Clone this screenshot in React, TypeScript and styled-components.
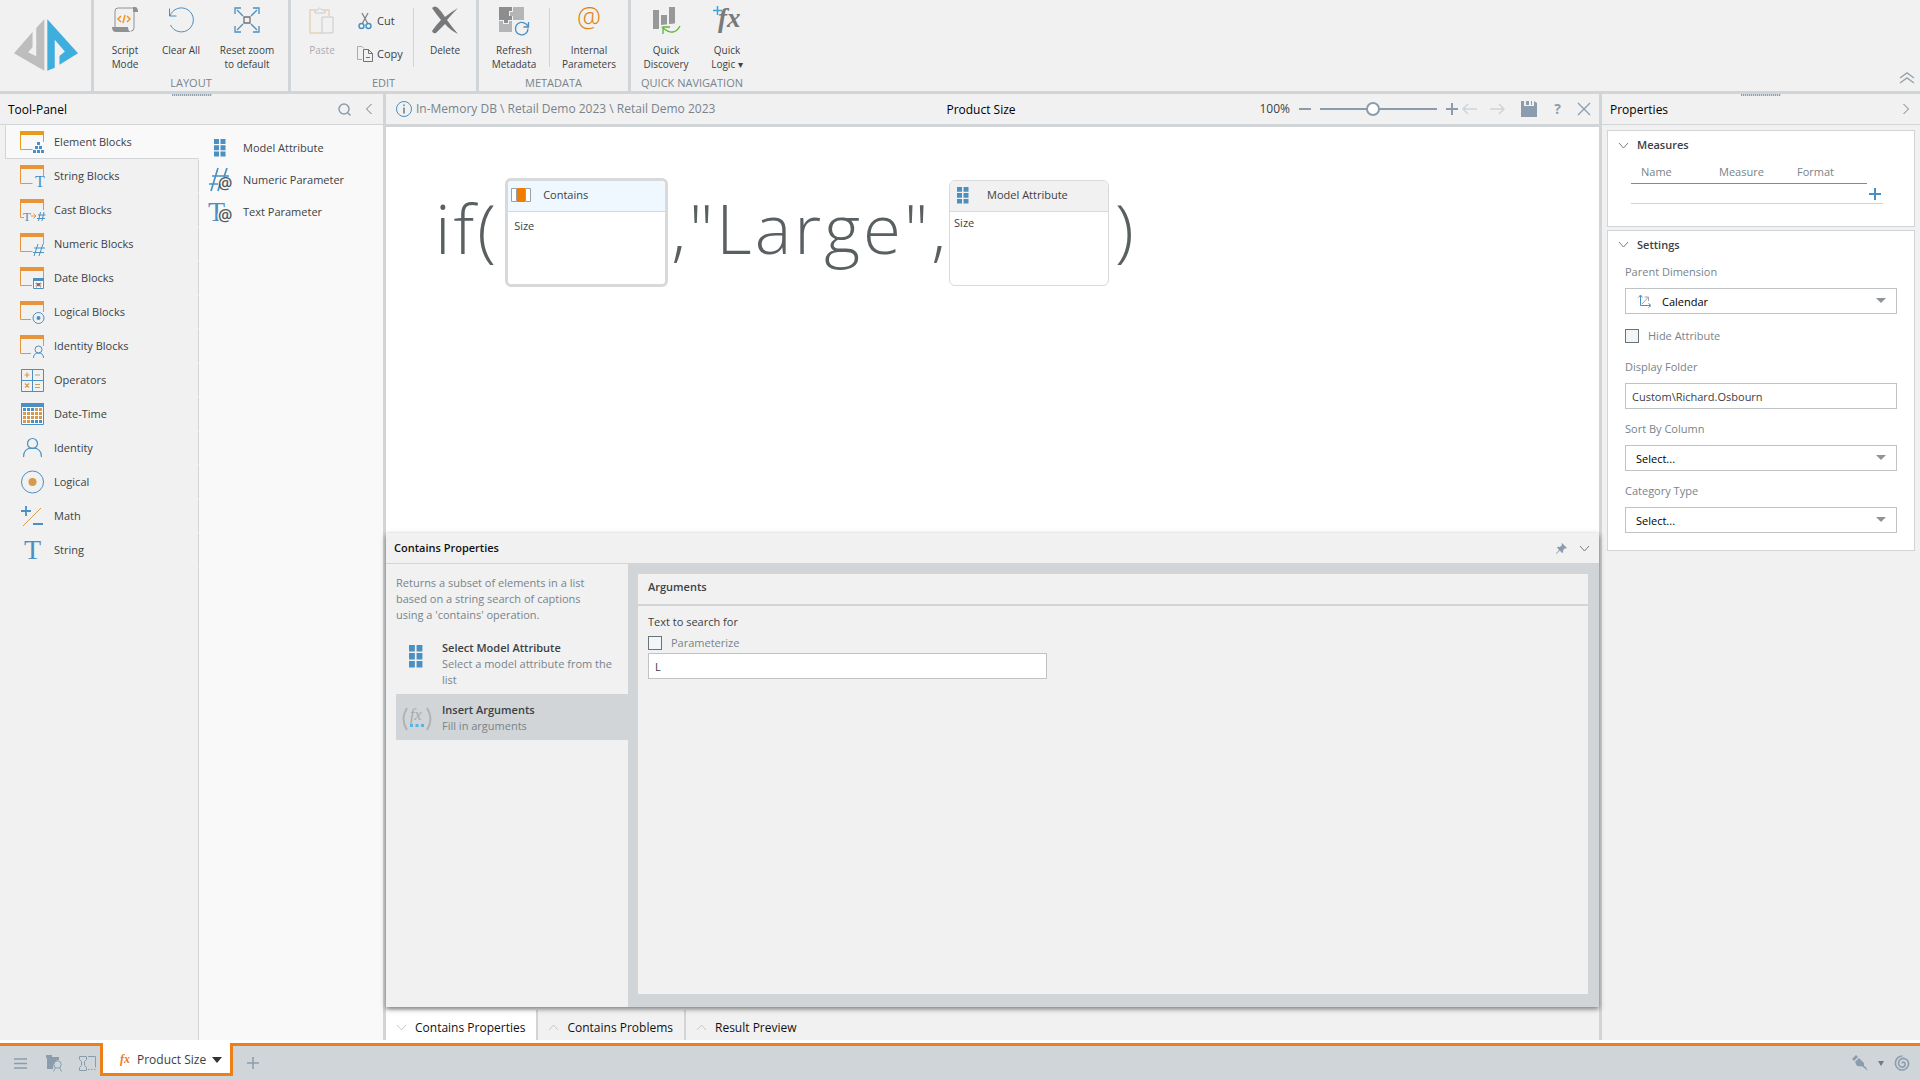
import React from "react";
import styled, { createGlobalStyle } from "styled-components";

const c = {
  bg: "#f1f1f1",
  line: "#d1d5d7",
  text: "#3b4145",
  muted: "#78848b",
  blue: "#4a90c2",
  orange: "#e8943a",
  steel: "#8b9dad",
  accent: "#ec7f17",
};

const Global = createGlobalStyle`
  *, *::before, *::after { box-sizing: border-box; }
  body { margin: 0; background: ${c.bg}; }
  button, input, select, table { font: inherit; color: inherit; }
  body, button, input, select { font-family: "Open Sans", "Noto Sans", sans-serif; }
  button { background: none; border: 0; padding: 0; cursor: pointer; }
  svg { display: block; flex: none; overflow: visible; }
  h1, h2, h3, p, ul { margin: 0; padding: 0; font: inherit; list-style: none; }
`;

const Shell = styled.div`
  display: flex;
  flex-direction: column;
  min-height: 100vh;
  font-size: 11px;
  line-height: 16px;
  color: ${c.text};
  background: ${c.bg};
`;

/* ---------- ribbon ---------- */
const Ribbon = styled.header`
  display: flex;
  height: 94px;
  border-bottom: 3px solid ${c.line};
`;
const LogoLink = styled.a`
  display: flex;
  width: 94px;
  padding: 19px 0 0 14px;
  border-right: 3px solid ${c.line};
`;
const Group = styled.section<{ $last?: boolean }>`
  display: flex;
  flex-direction: column;
  border-right: ${(p) => (p.$last ? "0" : `3px solid ${c.line}`)};
`;
const GroupBody = styled.div`
  display: flex;
  height: 75px;
`;
const GroupTitle = styled.h2`
  line-height: 16px;
  text-align: center;
  color: ${c.muted};
`;
const BigButton = styled.button<{ $w: number; $off?: boolean }>`
  display: flex;
  flex-direction: column;
  align-items: center;
  justify-content: flex-start;
  gap: 8px;
  width: ${(p) => p.$w}px;
  padding-top: 5px;
  font-size: 10px;
  line-height: 14px;
  white-space: nowrap;
  opacity: ${(p) => (p.$off ? 0.4 : 1)};
`;
const SmallStack = styled.div`
  display: flex;
  flex-direction: column;
  gap: 9px;
  width: 60px;
  padding: 9px 0 0 4px;
`;
const SmallButton = styled.button`
  display: flex;
  align-items: center;
  gap: 4px;
  height: 24px;
  line-height: 14px;
`;
const Divider = styled.span`
  width: 1px;
  height: 59px;
  margin-top: 8px;
  background: ${c.line};
`;
const Collapse = styled.button`
  align-self: flex-end;
  margin: 0 5px 7px auto;
`;

/* ---------- layout ---------- */
const Body = styled.main`
  display: flex;
  flex: 1;
`;
const ToolPanel = styled.aside`
  display: flex;
  flex-direction: column;
  width: 386px;
  border-right: 3px solid ${c.line};
`;
const PanelHead = styled.div`
  position: relative;
  display: flex;
  align-items: center;
  gap: 14px;
  height: 31px;
  padding: 0 10px 0 8px;
  border-bottom: 1px solid ${c.line};
`;
const PanelTitle = styled.h2`
  flex: 1;
  padding-top: 2px;
  font-weight: 500;
  font-size: 12px;
  color: #000;
`;
const Grip = styled.span`
  position: absolute;
  top: 0;
  left: 50%;
  width: 40px;
  height: 2px;
  transform: translateX(-50%);
  background: repeating-linear-gradient(90deg, #8fa0ae 0 1px, #d5dade 1px 2px);
`;
const ToolBody = styled.div`
  display: flex;
  flex: 1;
`;
const Categories = styled.ul`
  width: 199px;
  padding-left: 5px;
`;
const Category = styled.button<{ $on?: boolean }>`
  display: flex;
  align-items: center;
  gap: 8px;
  width: 100%;
  height: 34px;
  padding-left: 14px;
  border: 1px solid transparent;
  border-right-color: ${(p) => (p.$on ? "#f9f9f9" : c.line)};
  ${(p) => p.$on && `background: #f9f9f9; border-left-color: ${c.line}; border-bottom-color: ${c.line};`}
`;
const CategoryRest = styled.li`
  height: calc(100% - 442px);
  border-right: 1px solid ${c.line};
`;
const BlockList = styled.ul`
  flex: 1;
  padding: 7px 0 0 10px;
  background: #f9f9f9;
`;
const BlockItem = styled.button`
  display: flex;
  align-items: center;
  gap: 10px;
  height: 32px;
`;

const Work = styled.section`
  display: flex;
  flex: 1;
  flex-direction: column;
  min-width: 0;
`;
const WorkBar = styled.div`
  display: grid;
  grid-template-columns: 1fr auto 1fr;
  align-items: center;
  height: 33px;
  padding: 0 9px 0 10px;
  border-bottom: 3px solid ${c.line};
`;
const Crumbs = styled.nav`
  display: flex;
  align-items: center;
  gap: 4px;
  font-size: 12px;
  color: ${c.muted};
`;
const WorkTitle = styled.h1`
  padding: 2px 24px 0 0;
  font-size: 12px;
  font-weight: 500;
  color: #000;
`;
const Tools = styled.div`
  display: flex;
  align-items: center;
  justify-content: flex-end;
  gap: 4px;
`;
const Actions = styled.div`
  display: flex;
  align-items: center;
  gap: 16px;
`;
const History = styled.div`
  display: flex;
  gap: 13px;
`;
const Zoom = styled.label`
  display: flex;
  align-items: center;
  gap: 9px;
  font-size: 12px;
`;
const Range = styled.input`
  appearance: none;
  width: 117px;
  height: 16px;
  margin: 0;
  background: linear-gradient(${c.steel}, ${c.steel}) center / 100% 2px no-repeat;
  &::-webkit-slider-thumb {
    appearance: none;
    width: 14px;
    height: 14px;
    border: 2px solid ${c.steel};
    border-radius: 50%;
    background: #fff;
  }
`;
const Glyph = styled.span`
  display: block;
  width: 9px;
  font-size: 14px;
  font-weight: 700;
  color: ${c.steel};
`;
const Canvas = styled.div`
  display: flex;
  flex: 1;
  align-items: flex-start;
  gap: 3px;
  padding: 51px 0 0 49px;
  background: #fff;
`;
const Char = styled.span`
  font-size: 69px;
  font-weight: 300;
  line-height: 98px;
  color: #5a6062;
`;
const Node = styled.article<{ $on?: boolean }>`
  width: ${(p) => (p.$on ? 163 : 160)}px;
  height: ${(p) => (p.$on ? 109 : 106)}px;
  margin: ${(p) => (p.$on ? "0 0 0 6px" : "2px 3px 0 0")};
  border: ${(p) => (p.$on ? 3 : 1)}px solid #d7d9da;
  border-radius: 6px;
  overflow: hidden;
`;
const NodeHead = styled.header<{ $on?: boolean }>`
  display: flex;
  align-items: center;
  gap: ${(p) => (p.$on ? 12 : 18)}px;
  height: 31px;
  padding: 0 0 2px ${(p) => (p.$on ? 3 : 7)}px;
  font-weight: ${(p) => (p.$on ? 500 : 400)};
  background: ${(p) => (p.$on ? "#eef8fe" : "#f1f1f1")};
  border-bottom: 1px solid ${(p) => (p.$on ? "#c6dde9" : "#d7d9da")};
`;
const NodeBody = styled.p<{ $on?: boolean }>`
  padding: ${(p) => (p.$on ? "6px 6px" : "3px 4px")};
`;

/* ---------- block properties ---------- */
const Sheet = styled.section`
  position: relative;
  display: flex;
  flex-direction: column;
  height: 474px;
  background: ${c.bg};
  box-shadow: 0 2px 5px rgba(0, 0, 0, 0.5);
`;
const SheetHead = styled.div`
  display: flex;
  align-items: center;
  gap: 12px;
  height: 31px;
  padding: 0 9px 0 8px;
  border-bottom: 1px solid ${c.line};
`;
const SheetTitle = styled.h2`
  flex: 1;
  font-weight: 600;
  color: #111;
`;
const SheetBody = styled.div`
  display: flex;
  flex: 1;
`;
const Steps = styled.div`
  width: 242px;
  padding: 11px 0 0 10px;
  color: ${c.muted};
`;
const Intro = styled.p`
  width: 200px;
  margin-bottom: 9px;
`;
const Step = styled.button<{ $on?: boolean }>`
  display: flex;
  gap: 10px;
  width: 100%;
  padding: 8px 4px 6px 6px;
  text-align: left;
  background: ${(p) => (p.$on ? c.line : "transparent")};
`;
const StepText = styled.span`
  flex: 1;
`;
const StepTitle = styled.strong`
  display: block;
  font-weight: 600;
  color: ${c.text};
`;
const ArgsFrame = styled.div`
  flex: 1;
  padding: 10px 11px 13px 10px;
  background: ${c.line};
`;
const Args = styled.div`
  height: 100%;
  background: ${c.bg};
`;
const ArgsTitle = styled.h3`
  height: 32px;
  padding: 5px 10px 0;
  font-weight: 600;
  border-bottom: 2px solid ${c.line};
`;
const ArgsBody = styled.div`
  display: flex;
  flex-direction: column;
  gap: 5px;
  width: 419px;
  padding: 8px 10px;
`;
const ArgsField = styled.div`
  display: flex;
  flex-direction: column;
  gap: 2px;
`;
const CheckLabel = styled.label`
  display: flex;
  align-items: center;
  gap: 9px;
  color: ${c.muted};
`;
const SettingCheck = styled(CheckLabel)`
  margin: 2px 0 3px;
`;
const Check = styled.input`
  appearance: none;
  width: 14px;
  height: 14px;
  margin: 0;
  border: 1px solid #6c7377;
  background: #f3f6f9;
  &:checked { background: ${c.blue}; }
`;
const TextInput = styled.input`
  width: 100%;
  height: 26px;
  padding: 1px 6px 0;
  border: 1px solid #bfc3c5;
  background: #fff;
`;
const Tabs = styled.div`
  display: flex;
  height: 33px;
  padding-top: 3px;
`;
const Tab = styled.button<{ $on?: boolean; $last?: boolean }>`
  display: flex;
  align-items: center;
  gap: 8px;
  padding: 5px 11px 0 10px;
  font-size: 12px;
  font-weight: 500;
  color: #111;
  background: ${(p) => (p.$on ? "#fff" : "transparent")};
  border-right: ${(p) => (p.$last ? "0" : `2px solid ${c.line}`)};
`;

/* ---------- properties ---------- */
const Props = styled.aside`
  width: 321px;
  border-left: 3px solid ${c.line};
`;
const Cards = styled.div`
  display: flex;
  flex-direction: column;
  gap: 3px;
  padding: 5px;
`;
const Card = styled.section`
  padding: 6px 17px 17px;
  border: 1px solid ${c.line};
  background: #fff;
`;
const CardHead = styled.button`
  display: flex;
  align-items: center;
  gap: 8px;
  height: 16px;
  margin-left: -7px;
  font-weight: 600;
`;
const Grid = styled.table`
  width: 252px;
  margin: 11px 0 5px 6px;
  border-collapse: collapse;
  color: ${c.muted};
  th {
    height: 19px;
    padding: 0 0 2px 10px;
    font-weight: 400;
    text-align: left;
    border-bottom: 1px solid #84898c;
  }
  th:last-child { border: 0; }
  td { height: 20px; padding: 0; border-bottom: 1px solid #d0d2d3; }
`;
const AddRow = styled.button`
  display: block;
  padding: 3px 0 0 2px;
`;
const Field = styled.div`
  display: flex;
  flex-direction: column;
  gap: 8px;
`;
const Fields = styled.div`
  display: flex;
  flex-direction: column;
  gap: 12px;
  padding-top: 11px;
`;
const FieldLabel = styled.label`
  line-height: 16px;
  color: ${c.muted};
`;
const SelectBox = styled.div`
  position: relative;
`;
const Select = styled.select<{ $icon?: boolean }>`
  appearance: none;
  width: 100%;
  height: 26px;
  padding: 2px 30px 0 ${(p) => (p.$icon ? 36 : 10)}px;
  border: 1px solid #bfc3c5;
  border-radius: 0;
  background: #fff;
  color: #000;
`;
const Over = styled.span<{ $side: "left" | "right" }>`
  position: absolute;
  ${(p) => p.$side}: ${(p) => (p.$side === "left" ? 13 : 11)}px;
  top: 0;
  display: flex;
  align-items: center;
  height: 26px;
  pointer-events: none;
`;

/* ---------- task bar ---------- */
const TaskBar = styled.footer`
  display: flex;
  align-items: center;
  height: 40px;
  padding: 3px 10px 0 14px;
  border-top: 3px solid #fff;
  background: linear-gradient(${c.accent} 0 3px, #d0d5d9 3px);
`;
const TaskIcons = styled.div`
  display: flex;
  align-items: center;
  gap: 17px;
  width: 86px;
`;
const FileTab = styled.button`
  display: flex;
  align-items: center;
  align-self: flex-start;
  gap: 6px;
  width: 133px;
  height: 33px;
  margin-top: -3px;
  padding: 4px 0 0 17px;
  font-size: 12px;
  border: solid ${c.accent};
  border-width: 0 3px 3px;
  background: #fff;
`;
const AddTab = styled.button`
  margin-left: 14px;
`;
const TaskEnd = styled.div`
  display: flex;
  align-items: center;
  gap: 10px;
  margin-left: auto;
`;

/* ---------- icons ---------- */
type StrokeProps = { d: string; w?: number; h?: number; color?: string; sw?: number };
const Stroke = ({ d, w = 12, h = 12, color = c.steel, sw = 1 }: StrokeProps) => (
  <svg width={w} height={h} viewBox={`0 0 ${w} ${h}`} fill="none" stroke={color} strokeWidth={sw} aria-hidden="true">
    <path d={d} />
  </svg>
);
const Caret = ({ w = 10, h = 5, color = "#909497" }: { w?: number; h?: number; color?: string }) => (
  <svg width={w} height={h} viewBox="0 0 10 6" preserveAspectRatio="none" fill={color} aria-hidden="true">
    <path d="M0 0h10L5 6z" />
  </svg>
);
const Logo = () => (
  <svg width="64" height="52" viewBox="42 57 190 153" aria-hidden="true">
    <path fill="#bdbdbe" d="M132 57v153L42 158l55-63v45l-13 15 24 12V83z" />
    <path fill="#3eaedd" d="M141 57l91 101-55 34v-26l16-13-30-35v83l-22 9z" />
  </svg>
);
const Big = ({ children }: { children: React.ReactNode }) => (
  <svg width="30" height="30" viewBox="0 0 30 30" fill="none" aria-hidden="true">{children}</svg>
);
const ScriptIcon = () => (
  <Big>
    <path d="M5 22V6q0-3 3-3h17M24 7v16q0 3-3 3" stroke="#8f9193" />
    <path d="M23 2h2q3 0 3 5h-5zM2 22h16q0 5 4 5H6q-4 0-4-5z" fill="#8f9193" />
    <path d="M11 11l-3 3 3 3M17 11l3 3-3 3M15 10l-2 8" stroke="#f0952a" strokeWidth="1.500" />
  </Big>
);
const ClearIcon = () => (
  <Big>
    <path d="M4 11A12 12 0 1 1 4.500 20M3.500 3.500V11H10.500" stroke="#4a90c2" />
  </Big>
);
const ResetIcon = () => (
  <Big>
    <path d="M3 9V3h6M21 3h6v6M27 21v6h-6M9 27H3v-6M5 5l6 6M25 5l-6 6M25 25l-6-6M5 25l6-6" stroke="#4a90c2" strokeWidth="1.300" />
    <path d="M12 12h6v6h-6z" stroke="#6f7375" strokeWidth="1.300" />
  </Big>
);
const PasteIcon = () => (
  <Big>
    <path d="M8 5H3v23h12M18 5h4v6" stroke="#e0a263" strokeWidth="1.400" />
    <path d="M8 8V5h3q1-4 4 0h3v3zM15 12h11v16H15z" stroke="#8f9193" fill="#f1f1f1" />
  </Big>
);
const DeleteIcon = () => (
  <Big>
    <path d="M2 3q3-3 6 0 4 4 7 9 6-5 13-9-6 6-11 12 5 7 11 14-8-4-13-10-5 5-9 9-3 1-4-2 4-6 9-11Q6 9 2 3z" fill="#76787a" />
  </Big>
);
const RefreshIcon = () => (
  <Big>
    <path d="M0 2h13v4h-3v5h3v4H9v3H5v-3H0z" fill="#8b8d8f" />
    <path d="M14 2h11v13H14v-4h-3V7h3zM0 16h4v3h6v-3h3v11H0z" fill="#b4b5b6" />
    <circle cx="23" cy="24" r="8" fill="#f1f1f1" />
    <path d="M29 23.500a6.300 6.300 0 1 1-2-4.500l2 2M29.500 17v5h-5" stroke="#4a90c2" strokeWidth="1.300" />
  </Big>
);
const AtIcon = () => (
  <Big>
    <text x="15" y="22" textAnchor="middle" fontFamily="Open Sans" fontSize="27" fontWeight="300" fill="#e07f10">@</text>
  </Big>
);
const DiscoveryIcon = () => (
  <Big>
    <path d="M2 5h6v19H2zM10 10h6v13h-6zM18 2h6v17h-6z" fill="#96989a" />
    <path d="M28 18l2 4q-7 9-19 3l-1-5z" fill="#f1f1f1" />
    <path d="M29 21q-6 11-17 2M12 29v-7h7" stroke="#5cb531" strokeWidth="1.300" />
  </Big>
);
const LogicIcon = () => (
  <Big>
    <path d="M1 5.500h9M5.500 1v9" stroke="#3aa5dc" strokeWidth="1.500" />
    <text x="6" y="22" fontFamily="Liberation Serif" fontSize="27" fontWeight="700" fontStyle="italic" fill="#77797b">fx</text>
  </Big>
);
const CutIcon = () => (
  <svg width="16" height="18" viewBox="0 0 16 18" fill="none" aria-hidden="true">
    <path d="M5 1l6 11M11 1L5 12" stroke="#808386" strokeWidth="1.300" />
    <circle cx="4.500" cy="14" r="2.500" stroke="#4a90c2" strokeWidth="1.400" />
    <circle cx="11.500" cy="14" r="2.500" stroke="#4a90c2" strokeWidth="1.400" />
  </svg>
);
const CopyIcon = () => (
  <svg width="16" height="17" viewBox="0 0 16 17" fill="none" aria-hidden="true">
    <path d="M5 13.500H.5V.5H5L7 2.500" stroke="#a9abad" />
    <path d="M6.500 3.500h5l4 4v8h-9zM11.500 3.500v4h4M9 11.500h4" stroke="#707376" />
  </svg>
);
const Six = ({ w = 12, h = 18 }: { w?: number; h?: number }) => (
  <svg width={w} height={h} viewBox="0 0 12 18" fill={c.blue} preserveAspectRatio="none" aria-hidden="true">
    <path d="M0 0h5v5H0zM6.500 0h5v5h-5zM0 6.300h5v5H0zM6.500 6.300h5v5h-5zM0 12.600h5v5H0zM6.500 12.600h5v5h-5z" />
  </svg>
);
const Cat = ({ children }: { children: React.ReactNode }) => (
  <svg width="26" height="26" viewBox="0 0 26 26" fill="none" aria-hidden="true">{children}</svg>
);
const Win = ({ children, gap = 12 }: { children: React.ReactNode; gap?: number }) => (
  <Cat>
    <path d="M.5 3v17.500h12M23.500 3v10" stroke={c.orange} />
    <path d="M0 2h24v4H0z" fill={c.orange} />
    <path d={`M${gap} 13h14v12H${gap}z`} fill={c.bg} stroke="none" />
    {children}
  </Cat>
);
const tee = (x: number, y: number, size: number) => (
  <text x={x} y={y} fontFamily="Liberation Serif" fontSize={size} fill={c.blue}>T</text>
);
const categories: [string, React.ReactNode][] = [
  ["Element Blocks", (
    <Cat>
      <path d="M.5 3v17.500h12M23.500 3v10" stroke="#e79a1c" />
      <path d="M0 2h24v4H0z" fill="#e79a1c" />
      <path d="M17 13h3v3h-3zM15 17h3v3h-3zM19 17h3v3h-3zM13 21h3v3h-3zM17 21h3v3h-3zM21 21h3v3h-3z" fill={c.blue} />
    </Cat>
  )],
  ["String Blocks", <Win gap={15}>{tee(15, 24, 16)}</Win>],
  ["Cast Blocks", (
    <Win gap={4}>
      {tee(3, 24, 13)}
      <path d="M11 19h5M13.500 16.500l2.500 2.500-2.500 2.500" stroke={c.orange} />
      <path d="M20.500 15l-2 9M24 15l-2 9M18 18h7.500M17 21.500h8" stroke={c.blue} />
    </Win>
  )],
  ["Numeric Blocks", (
    <Win gap={13}>
      <path d="M18 13l-4 12M23 13l-4 12M14 17h11M13 21.500h11" stroke={c.blue} />
    </Win>
  )],
  ["Date Blocks", (
    <Win gap={12}>
      <path d="M13.500 13.500h10v10h-10z" stroke={c.blue} fill="#fff" />
      <path d="M13 13h11v3H13z" fill={c.blue} />
      <path d="M15 18.500h7M15 21h7M16.500 17v6M20.500 17v6" stroke="#9aa5ad" strokeWidth=".7" />
      <path d="M17 18h3v3h-3z" fill="#d0583a" />
    </Win>
  )],
  ["Logical Blocks", (
    <Win gap={11}>
      <circle cx="18.500" cy="19" r="5.500" stroke={c.blue} />
      <circle cx="18.500" cy="19" r="2" fill={c.blue} />
    </Win>
  )],
  ["Identity Blocks", (
    <Win gap={11}>
      <circle cx="18.500" cy="16.500" r="3.500" stroke={c.blue} />
      <path d="M13.500 25q0-5 5-5t5 5" stroke={c.blue} />
    </Win>
  )],
  ["Operators", (
    <Cat>
      <path d="M1.500 2.500h22v22h-22zM12.500 2.500v22M1.500 13.500h22" stroke={c.blue} />
      <path d="M4.500 8h5M7 5.500v5M15 8h5M5 16.500l4 4M9 16.500l-4 4M15 17.500h5M15 20.500h5" stroke="#d59a4c" strokeWidth="1.200" />
    </Cat>
  )],
  ["Date-Time", (
    <Cat>
      <path d="M1.500 2.500h22v21h-22z" stroke={c.blue} fill="#fff" />
      <path d="M1 2h23v4H1z" fill={c.blue} />
      {[7, 11, 15, 19].map((y, r) =>
        [3, 7, 11, 15, 19].map((x, k) => (
          <rect key={`${x}-${y}`} x={x} y={y} width="3" height="3" fill={(r === 0 && k < 3) || (r === 3 && k > 1) ? c.blue : "#d59a4c"} />
        ))
      )}
    </Cat>
  )],
  ["Identity", (
    <Cat>
      <circle cx="12.500" cy="8.500" r="5" stroke={c.blue} strokeWidth="1.200" />
      <path d="M3.500 22q0-9 9-9t9 9" stroke={c.blue} strokeWidth="1.200" />
    </Cat>
  )],
  ["Logical", (
    <Cat>
      <circle cx="12.500" cy="13" r="11" stroke={c.blue} />
      <circle cx="12.500" cy="13" r="4" fill="#d59a4c" />
    </Cat>
  )],
  ["Math", (
    <Cat>
      <path d="M1 8h10M6 3v10M13 21h10" stroke={c.blue} strokeWidth="1.800" />
      <path d="M3 23L21 5" stroke="#d59a4c" />
    </Cat>
  )],
  ["String", <Cat>{tee(4, 22, 28)}</Cat>],
];
const blocks: [string, React.ReactNode][] = [
  ["Model Attribute", <svg width="24" height="18" aria-hidden="true"><g transform="translate(5 0)"><Six /></g></svg>],
  ["Numeric Parameter", (
    <svg width="24" height="26" viewBox="0 0 24 26" fill="none" aria-hidden="true">
      <path d="M9 1L2 24M18 1l-3 9M11 17l-2 7M3 9h17M0 17h9" stroke={c.blue} strokeWidth="1.700" />
      <text x="9" y="22" fontFamily="Open Sans" fontSize="16" fontWeight="600" fill="#55595c">@</text>
    </svg>
  )],
  ["Text Parameter", (
    <svg width="24" height="26" viewBox="0 0 24 26" fill="none" aria-hidden="true">
      <text fontFamily="Liberation Serif" fontSize="28" fill={c.blue}>
        <tspan x="-1" y="22">T</tspan>
        <tspan x="9" y="22" fontFamily="Open Sans" fontSize="16" fontWeight="600" fill="#55595c" stroke="#f9f9f9" strokeWidth="3" paintOrder="stroke">@</tspan>
      </text>
    </svg>
  )],
];

const downV = "M1 3l4.500 5L10 3";
const upV = "M1 8l4.500-5L10 8";

const Dropdown = ({ id, label, value, icon }: { id: string; label: string; value: string; icon?: boolean }) => (
  <Field>
    <FieldLabel htmlFor={id}>{label}</FieldLabel>
    <SelectBox>
      <Select id={id} $icon={icon} defaultValue={value}>
        <option>{value}</option>
      </Select>
      {icon && (
        <Over $side="left">
          <svg width="14" height="14" viewBox="0 0 14 14" fill="none" aria-hidden="true">
            <path d="M2.500 2v9.500H12M.5 3.500l2-2.500 2 2.500M10.500 9.500l2.500 2-2.500 2" stroke={c.blue} />
            <path d="M4 10l6.500-7M6.500 3h4v4" stroke="#9fa5a9" />
          </svg>
        </Over>
      )}
      <Over $side="right"><Caret /></Over>
    </SelectBox>
  </Field>
);

const Chars = ({ text }: { text: string }) => (
  <>{text.split("").map((ch, i) => <Char key={i}>{ch}</Char>)}</>
);

export default function App() {
  return (
    <Shell>
      <Global />
      <Ribbon>
        <LogoLink href="#" aria-label="Home"><Logo /></LogoLink>
        <Group>
          <GroupBody>
            <BigButton $w={62}><ScriptIcon /><span>Script<br />Mode</span></BigButton>
            <BigButton $w={50}><ClearIcon />Clear All</BigButton>
            <BigButton $w={82}><ResetIcon /><span>Reset zoom<br />to default</span></BigButton>
          </GroupBody>
          <GroupTitle>LAYOUT</GroupTitle>
        </Group>
        <Group>
          <GroupBody>
            <BigButton $w={62} $off disabled><PasteIcon />Paste</BigButton>
            <SmallStack>
              <SmallButton><CutIcon />Cut</SmallButton>
              <SmallButton><CopyIcon />Copy</SmallButton>
            </SmallStack>
            <Divider />
            <BigButton $w={62}><DeleteIcon />Delete</BigButton>
          </GroupBody>
          <GroupTitle>EDIT</GroupTitle>
        </Group>
        <Group>
          <GroupBody>
            <BigButton $w={70}><RefreshIcon /><span>Refresh<br />Metadata</span></BigButton>
            <Divider />
            <BigButton $w={78}><AtIcon /><span>Internal<br />Parameters</span></BigButton>
          </GroupBody>
          <GroupTitle>METADATA</GroupTitle>
        </Group>
        <Group $last>
          <GroupBody>
            <BigButton $w={70}><DiscoveryIcon /><span>Quick<br />Discovery</span></BigButton>
            <BigButton $w={52}><LogicIcon /><span>Quick<br />Logic ▾</span></BigButton>
          </GroupBody>
          <GroupTitle>QUICK NAVIGATION</GroupTitle>
        </Group>
        <Collapse aria-label="Collapse ribbon"><Stroke w={16} h={12} d="M1 6l7-5 7 5M1 11l7-5 7 5" color="#9ba3a9" sw={1.5} /></Collapse>
      </Ribbon>

      <Body>
        <ToolPanel>
          <PanelHead>
            <Grip />
            <PanelTitle>Tool-Panel</PanelTitle>
            <button aria-label="Search"><Stroke w={13} h={13} sw={1.5} d="M11 6a5 5 0 1 1-10 0a5 5 0 1 1 10 0M9.500 9.500l3 3" /></button>
            <button aria-label="Collapse panel"><Stroke w={8} h={12} d="M6.500 1l-5 5 5 5" color="#777d81" /></button>
          </PanelHead>
          <ToolBody>
            <Categories>
              {categories.map(([name, icon], i) => (
                <li key={name}><Category $on={i === 0}>{icon}{name}</Category></li>
              ))}
              <CategoryRest aria-hidden="true" />
            </Categories>
            <BlockList>
              {blocks.map(([name, icon]) => (
                <li key={name}><BlockItem>{icon}{name}</BlockItem></li>
              ))}
            </BlockList>
          </ToolBody>
        </ToolPanel>

        <Work>
          <WorkBar>
            <Crumbs>
              <svg width="16" height="16" viewBox="0 0 16 16" fill="none" aria-hidden="true">
                <circle cx="8" cy="8" r="7.500" stroke={c.blue} />
                <path d="M8 3.500v1.500M8 6.500v6" stroke="#6d7c86" strokeWidth="1.500" />
              </svg>
              In-Memory DB \ Retail Demo 2023 \ Retail Demo 2023
            </Crumbs>
            <WorkTitle>Product Size</WorkTitle>
            <Tools>
              <Zoom>
                100%
                <Stroke w={12} h={12} d="M0 6h12" sw={2} />
                <Range type="range" min={0} max={100} defaultValue={45} aria-label="Zoom" />
                <Stroke w={12} h={12} d="M0 6h12M6 0v12" sw={2} />
              </Zoom>
              <Actions>
                <History>
                  <button aria-label="Undo"><Stroke w={15} h={12} d="M15 6H1M6 1L1 6l5 5" color="#cfd4d8" sw={1.5} /></button>
                  <button aria-label="Redo"><Stroke w={15} h={12} d="M0 6h14M9 1l5 5-5 5" color="#cfd4d8" sw={1.5} /></button>
                </History>
                <button aria-label="Save">
                  <svg width="16" height="16" viewBox="0 0 16 16" fill={c.steel} aria-hidden="true">
                    <path d="M0 0h3v5h10V0l3 2v14H0zM5 0h3v4H5zM10 0h1v4h-1z" />
                  </svg>
                </button>
                <button aria-label="Help"><Glyph>?</Glyph></button>
                <button aria-label="Close"><Stroke w={12} h={12} d="M0 0l12 12M12 0L0 12" sw={1.3} /></button>
              </Actions>
            </Tools>
          </WorkBar>
          <Canvas>
            <Chars text="if(" />
            <Node $on>
              <NodeHead $on>
                <svg width="20" height="14" viewBox="0 0 20 14" fill="#fff" aria-hidden="true">
                  <path d="M.5.5h5v13h-5zM14.500.5h5v13h-5z" stroke="#9aa1a6" />
                  <path d="M6 0h8v14H6z" fill="#f07d00" />
                </svg>
                Contains
              </NodeHead>
              <NodeBody $on>Size</NodeBody>
            </Node>
            <Chars text={',"Large",'} />
            <Node>
              <NodeHead><Six w={12} h={17} />Model Attribute</NodeHead>
              <NodeBody>Size</NodeBody>
            </Node>
            <Chars text=")" />
          </Canvas>

          <Sheet>
            <SheetHead>
              <SheetTitle>Contains Properties</SheetTitle>
              <button aria-label="Pin">
                <svg width="11" height="11" viewBox="0 0 11 11" fill={c.steel} aria-hidden="true">
                  <path d="M6 0l5 5-1 .5-1-.3-2 2 .2 2L6 10 3.800 7.500.5 11 0 10.500 3 7 1 4.500l1-.7 2 .2 2-2L5.500 1z" />
                </svg>
              </button>
              <button aria-label="Collapse"><Stroke w={11} h={10} d={downV} color="#777d81" /></button>
            </SheetHead>
            <SheetBody>
              <Steps>
                <Intro>Returns a subset of elements in a list based on a string search of captions using a 'contains' operation.</Intro>
                <Step>
                  <svg width="30" height="28" aria-hidden="true"><g transform="translate(7 5)"><Six w={14} h={23} /></g></svg>
                  <StepText><StepTitle>Select Model Attribute</StepTitle>Select a model attribute from the list</StepText>
                </Step>
                <Step $on>
                  <svg width="30" height="30" viewBox="0 0 30 30" fill="none" aria-hidden="true">
                    <path d="M5 6q-7 11 0 22M25 6q7 11 0 22" stroke="#b0b3b5" strokeWidth="2" />
                    <text x="8" y="18" fontFamily="Liberation Serif" fontSize="16" fontStyle="italic" fill="#a5a9ac">fx</text>
                    <path d="M8 22h3v3H8zM13.500 22h3v3h-3zM19 22h3v3h-3z" fill="#54b3ea" />
                  </svg>
                  <StepText><StepTitle>Insert Arguments</StepTitle>Fill in arguments</StepText>
                </Step>
              </Steps>
              <ArgsFrame>
                <Args>
                  <ArgsTitle>Arguments</ArgsTitle>
                  <ArgsBody>
                    <label htmlFor="search-text">Text to search for</label>
                    <ArgsField>
                      <CheckLabel><Check type="checkbox" />Parameterize</CheckLabel>
                      <TextInput id="search-text" defaultValue="L" />
                    </ArgsField>
                  </ArgsBody>
                </Args>
              </ArgsFrame>
            </SheetBody>
          </Sheet>
          <Tabs>
            <Tab $on><Stroke w={11} h={11} d={downV} color="#c5cbcf" />Contains Properties</Tab>
            <Tab><Stroke w={11} h={11} d={upV} color="#c5cbcf" />Contains Problems</Tab>
            <Tab $last><Stroke w={11} h={11} d={upV} color="#c5cbcf" />Result Preview</Tab>
          </Tabs>
        </Work>

        <Props>
          <PanelHead>
            <Grip />
            <PanelTitle>Properties</PanelTitle>
            <button aria-label="Collapse properties"><Stroke w={8} h={12} d="M1.500 1l5 5-5 5" color="#777d81" /></button>
          </PanelHead>
          <Cards>
            <Card>
              <CardHead><Stroke w={11} h={11} d={downV} color="#777d81" />Measures</CardHead>
              <Grid>
                <colgroup><col width="78" /><col width="78" /><col width="80" /><col width="16" /></colgroup>
                <thead><tr><th>Name</th><th>Measure</th><th>Format</th><th aria-label="Add" /></tr></thead>
                <tbody>
                  <tr>
                    <td colSpan={3} />
                    <td><AddRow aria-label="Add measure"><Stroke w={12} h={12} d="M0 6h12M6 0v12" color={c.blue} sw={2} /></AddRow></td>
                  </tr>
                </tbody>
              </Grid>
            </Card>
            <Card>
              <CardHead><Stroke w={11} h={11} d={downV} color="#777d81" />Settings</CardHead>
              <Fields>
                <Dropdown id="parent" label="Parent Dimension" value="Calendar" icon />
                <SettingCheck><Check type="checkbox" />Hide Attribute</SettingCheck>
                <Field>
                  <FieldLabel htmlFor="folder">Display Folder</FieldLabel>
                  <TextInput id="folder" defaultValue="Custom\Richard.Osbourn" />
                </Field>
                <Dropdown id="sort" label="Sort By Column" value="Select..." />
                <Dropdown id="category" label="Category Type" value="Select..." />
              </Fields>
            </Card>
          </Cards>
        </Props>
      </Body>

      <TaskBar>
        <TaskIcons>
          <button aria-label="Menu"><Stroke w={14} h={11} d="M0 1h13M0 5.500h13M0 10h13" sw={1.5} /></button>
          <button aria-label="Find content">
            <svg width="17" height="16" viewBox="0 0 17 16" fill="none" aria-hidden="true">
              <path d="M1 0h6v2h7v3Q8 5 8 14H2V3H1z" fill={c.steel} />
              <circle cx="12.500" cy="9.500" r="3.700" stroke={c.steel} /><path d="M10.500 12.500l-2 4M14.500 12.500l2 4" stroke={c.steel} />
            </svg>
          </button>
          <button aria-label="Models"><Stroke w={17} h={15} d="M.5.5h7v3l-2 2v4l2 2v3h-7v-3l2-2v-4l-2-2zM9 .5h7.500v11M9 13.500h1.500M12 13.500h1.500M15 13.500h1.500" /></button>
        </TaskIcons>
        <FileTab>
          <svg width="11" height="12" viewBox="0 0 11 12" aria-hidden="true">
            <text x="0" y="9" fontFamily="Liberation Serif" fontSize="12" fontWeight="700" fontStyle="italic" fill={c.accent}>fx</text>
          </svg>
          Product Size
          <Caret w={10} h={6} color="#333" />
        </FileTab>
        <AddTab aria-label="New tab"><Stroke w={12} h={12} d="M0 6h12M6 0v12" sw={1.5} /></AddTab>
        <TaskEnd>
          <button aria-label="Connection">
            <svg width="16" height="16" viewBox="0 0 16 16" fill={c.steel} aria-hidden="true">
              <path d="M0 4l4-4 2 2-4 4zM3 7l4-4 5 5v4l-2-.5L5 11zM11 12l2-1 3 5z" />
            </svg>
          </button>
          <Caret w={6} h={5} color="#6c7c8a" />
          <button aria-label="Assistant"><Stroke w={16} h={16} sw={1.6} d="M8 8.500a1.500 1.500 0 0 1 2.500-1a3 3 0 0 1-1 4.500a4 4 0 0 1-5-4a5 5 0 0 1 6-4.500a6 6 0 0 1 4 6.500a7 7 0 0 1-7.500 5a7 7 0 0 1-5.500-8a7 7 0 0 1 7-6" /></button>
        </TaskEnd>
      </TaskBar>
    </Shell>
  );
}
